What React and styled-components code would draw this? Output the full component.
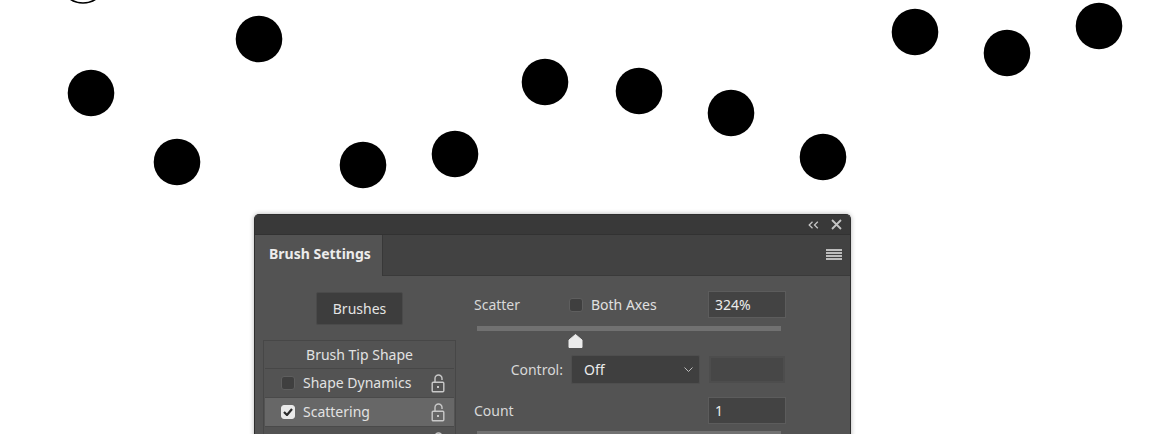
import * as React from 'react';
import styled, { createGlobalStyle } from 'styled-components';

const GlobalStyle = createGlobalStyle`
  html, body {
    margin: 0;
    padding: 0;
    background: #ffffff;
    overflow: hidden;
  }
  body {
    font-family: "Noto Sans", "Open Sans", sans-serif;
  }
`;

const dots = [
  [91, 93], [259, 39], [177, 162], [363, 165], [455, 154], [545, 82],
  [639, 91], [731, 113], [823, 157], [915, 32], [1007, 53], [1099, 26],
];

const Page = styled.div`
  width: 1170px;
  height: 434px;
  display: flex;
  flex-direction: column;
  overflow: hidden;
`;

const Canvas = styled.svg`
  display: block;
  flex: none;
`;

const PanelSlot = styled.div`
  padding-left: 254px;
`;

const Panel = styled.div`
  width: 597px;
  height: 260px;
  box-sizing: border-box;
  background: #535353;
  border-radius: 5px 5px 0 0;
  border: 1px solid #2e2e2e;
  border-bottom: none;
  box-shadow: 0 0 5px rgba(0, 0, 0, 0.3);
  overflow: hidden;
  color: #d8d8d8;
  font-size: 14px;
`;

const TitleBar = styled.div`
  height: 19px;
  background: #393939;
  border-bottom: 1px solid #323232;
  display: flex;
  align-items: center;
  justify-content: flex-end;
  gap: 12px;
  padding-right: 8px;
`;

const TabStrip = styled.div`
  height: 40px;
  background: #424242;
  display: flex;
  align-items: stretch;
  border-bottom: 1px solid #3a3a3a;
`;

const Tab = styled.div`
  width: 128px;
  background: #535353;
  margin-bottom: -1px;
  border-right: 1px solid #383838;
  display: flex;
  align-items: center;
  padding: 0 0 5px 14px;
  box-sizing: border-box;
  font-weight: 700;
  font-size: 14px;
  color: #ececec;
`;

const TabSpacer = styled.div`
  flex: 1;
  display: flex;
  align-items: center;
  justify-content: flex-end;
  padding: 0 8px 2px 0;
`;

const Content = styled.div`
  display: grid;
  grid-template-columns: 193px 312px;
  column-gap: 18px;
  padding: 16px 0 0 8px;
`;

const LeftCol = styled.div`
  display: flex;
  flex-direction: column;
  align-items: center;
`;

const PlainButton = styled.div`
  width: 87px;
  height: 33px;
  box-sizing: border-box;
  background: #3d3d3d;
  border: 1px solid #4a4a4a;
  border-radius: 2px;
  display: flex;
  align-items: center;
  justify-content: center;
  color: #e4e4e4;
`;

const ListBox = styled.div`
  align-self: stretch;
  margin-top: 15px;
  border: 1px solid #474747;
  border-bottom: none;
  padding: 0 1px;
`;

const ListHeader = styled.div`
  height: 28px;
  display: flex;
  align-items: center;
  justify-content: center;
  padding-bottom: 1px;
  box-sizing: border-box;
  border-bottom: 1px solid #474747;
  color: #e2e2e2;
`;

const ListRow = styled.div`
  height: 28px;
  display: flex;
  align-items: center;
  padding: 0 9px 0 16px;
  gap: 8px;
  border-bottom: 1px solid #4a4a4a;
  background: ${p => (p.active ? '#676767' : 'transparent')};
  color: #e2e2e2;
`;

const RowLabel = styled.span`
  flex: 1;
  margin-top: -1px;
`;

const Box = styled.span`
  width: 14px;
  height: 14px;
  flex: none;
  box-sizing: border-box;
  border-radius: 3px;
  border: 1px solid ${p => (p.checked ? '#eaeaea' : '#5e5e5e')};
  background: ${p => (p.checked ? '#eaeaea' : '#3f3f3f')};
  display: flex;
  align-items: center;
  justify-content: center;
`;

const RightCol = styled.div`
  display: flex;
  flex-direction: column;
  margin-top: -1px;
`;

const FieldRow = styled.div`
  height: ${p => p.h || 27}px;
  margin-top: ${p => p.mt || 0}px;
  display: flex;
  align-items: center;
`;

const Label = styled.span`
  width: ${p => p.w || 'auto'};
  text-align: ${p => p.align || 'left'};
  flex: none;
  color: #d8d8d8;
`;

const CheckLabel = styled.label`
  display: flex;
  align-items: center;
  gap: 8px;
  color: #e0e0e0;
`;

const NumberField = styled.div`
  margin-left: auto;
  width: 78px;
  height: 100%;
  box-sizing: border-box;
  background: #434343;
  border: 1px solid #5c5c5c;
  display: flex;
  align-items: center;
  padding: 0 0 1px 6px;
  color: #ececec;
`;

const Track = styled.div`
  margin: ${p => p.mt || 8}px 5px 0 3px;
  height: 5px;
  background: #717171;
`;

const ThumbRow = styled.div`
  height: 14px;
  margin-top: 3px;
  padding-left: 94px;
`;

const Select = styled.div`
  width: 129px;
  height: 100%;
  margin-left: 8px;
  box-sizing: border-box;
  background: #3f3f3f;
  border: 1px solid #4e4e4e;
  border-radius: 2px;
  display: flex;
  align-items: center;
  justify-content: space-between;
  padding: 0 6px 0 12px;
  color: #ececec;
`;

const DisabledField = styled.div`
  width: 76px;
  height: 27px;
  margin-left: 9px;
  box-sizing: border-box;
  background: #474747;
  border: 2px solid #4d4d4d;
`;

const Glyph = styled.svg`
  display: block;
  flex: none;
`;

function Lock() {
  return (
    <Glyph width="14" height="19" viewBox="0 0 14 19">
      <path d="M4 8 V4.5 a3.5 3.5 0 0 1 7 0 V6" fill="none" stroke="#c9c9c9" strokeWidth="1.4" />
      <rect x="1.2" y="8.2" width="11.6" height="9.6" rx="1" fill="none" stroke="#c9c9c9" strokeWidth="1.4" />
      <rect x="6" y="12" width="2" height="2" fill="#c9c9c9" />
    </Glyph>
  );
}

function Check() {
  return (
    <Glyph width="10" height="8" viewBox="0 0 10 8">
      <path d="M1 4 L4 7 L9 1" fill="none" stroke="#2b2b2b" strokeWidth="2.2" />
    </Glyph>
  );
}

export default function App() {
  return (
    <Page>
      <GlobalStyle />
      <Canvas width="1170" height="214" viewBox="0 0 1170 214">
        <circle cx="83" cy="-20" r="23" fill="none" stroke="#000" strokeWidth="1.6" />
        {dots.map(([x, y], i) => (
          <circle key={i} cx={x} cy={y} r="23.3" fill="#000" />
        ))}
      </Canvas>
      <PanelSlot>
        <Panel>
          <TitleBar>
            <Glyph width="11" height="8" viewBox="0 0 11 8">
              <path d="M4.5 0.8 L1.2 4 L4.5 7.2 M9.8 0.8 L6.5 4 L9.8 7.2" fill="none" stroke="#c4c4c4" strokeWidth="1.3" />
            </Glyph>
            <Glyph width="11" height="11" viewBox="0 0 11 11">
              <path d="M1 1 L10 10 M10 1 L1 10" fill="none" stroke="#c4c4c4" strokeWidth="1.8" />
            </Glyph>
          </TitleBar>
          <TabStrip>
            <Tab>Brush Settings</Tab>
            <TabSpacer>
              <Glyph width="16" height="11" viewBox="0 0 16 11">
                <rect y="0" width="16" height="2" fill="#bdbdbd" />
                <rect y="3" width="16" height="2" fill="#bdbdbd" />
                <rect y="6" width="16" height="2" fill="#bdbdbd" />
                <rect y="9" width="16" height="2" fill="#bdbdbd" />
              </Glyph>
            </TabSpacer>
          </TabStrip>
          <Content>
            <LeftCol>
              <PlainButton>Brushes</PlainButton>
              <ListBox>
                <ListHeader>Brush Tip Shape</ListHeader>
                <ListRow>
                  <Box />
                  <RowLabel>Shape Dynamics</RowLabel>
                  <Lock />
                </ListRow>
                <ListRow active>
                  <Box checked>
                    <Check />
                  </Box>
                  <RowLabel>Scattering</RowLabel>
                  <Lock />
                </ListRow>
                <ListRow>
                  <Box />
                  <RowLabel />
                  <Lock />
                </ListRow>
              </ListBox>
            </LeftCol>
            <RightCol>
              <FieldRow>
                <Label w="95px">Scatter</Label>
                <CheckLabel>
                  <Box />
                  Both Axes
                </CheckLabel>
                <NumberField>324%</NumberField>
              </FieldRow>
              <Track />
              <ThumbRow>
                <Glyph width="15" height="14" viewBox="0 0 15 14">
                  <path d="M7.5 0.5 L14 6 V13.5 H1 V6 Z" fill="#ececec" stroke="#ececec" strokeLinejoin="round" />
                </Glyph>
              </ThumbRow>
              <FieldRow h={29} mt={7}>
                <Label w="89px" align="right">Control:</Label>
                <Select>
                  Off
                  <Glyph width="9" height="5" viewBox="0 0 9 5">
                    <path d="M0.5 0.5 L4.5 4.5 L8.5 0.5" fill="none" stroke="#bdbdbd" strokeWidth="1" />
                  </Glyph>
                </Select>
                <DisabledField />
              </FieldRow>
              <FieldRow h={27} mt={13}>
                <Label>Count</Label>
                <NumberField>1</NumberField>
              </FieldRow>
              <Track mt={7} />
            </RightCol>
          </Content>
        </Panel>
      </PanelSlot>
    </Page>
  );
}
